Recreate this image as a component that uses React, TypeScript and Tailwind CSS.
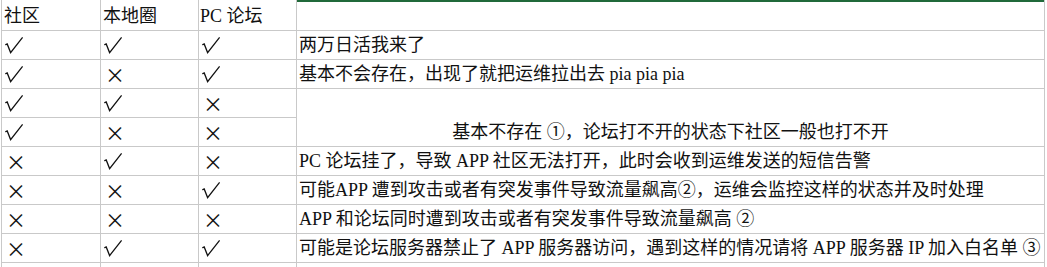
import React from "react";

const FONT = '"Liberation Serif", "Noto Sans CJK SC", serif';
const SYM = '"Noto Sans CJK SC", "Liberation Serif", serif';

type Row = [string, string, string, string | null];

const rows: Row[] = [
  ["√", "√", "√", "两万日活我来了"],
  ["√", "×", "√", "基本不会存在，出现了就把运维拉出去 pia pia pia"],
  ["√", "√", "×", "MERGED"],
  ["√", "×", "×", null],
  ["×", "√", "×", "PC 论坛挂了，导致 APP 社区无法打开，此时会收到运维发送的短信告警"],
  ["×", "×", "√", "可能APP 遭到攻击或者有突发事件导致流量飙高②，运维会监控这样的状态并及时处理"],
  ["×", "×", "×", "APP 和论坛同时遭到攻击或者有突发事件导致流量飙高 ②"],
  ["×", "√", "√", "可能是论坛服务器禁止了 APP 服务器访问，遇到这样的情况请将 APP 服务器 IP 加入白名单 ③"],
];

function Check() {
  return (
    <svg width="18" height="17" viewBox="0 0 18 17" fill="none" aria-label="√">
      <path d="M0.8 7.6 L2.2 6.9 L5.6 15.6 L17.2 0.8" stroke="#111" strokeWidth="1.3" strokeLinejoin="miter" strokeLinecap="round" />
    </svg>
  );
}

function Sym({ c }: { c: string }) {
  if (c === "√") {
    return (
      <div className="bg-white flex items-center pl-[3px] pt-px">
        <Check />
      </div>
    );
  }
  return (
    <div className="bg-white flex items-center pl-[4px] pt-[2px]" style={{ fontFamily: SYM }}>
      <span className="text-[20px] leading-none text-[#111]">{c}</span>
    </div>
  );
}

export default function App() {
  return (
    <div className="w-[1047px] h-[267px] bg-white overflow-hidden" style={{ fontFamily: FONT }}>
      <div className="ml-[1px] w-[1044px] grid grid-cols-[98px_97px_97px_747px] grid-rows-[30px_repeat(9,28px)] gap-px px-px bg-[#c9c9c9] text-[18px] text-[#111] leading-none">
        <div className="bg-white flex items-center pl-[2px] pt-[2px]">社区</div>
        <div className="bg-white flex items-center pl-[2px] pt-[2px]">本地圈</div>
        <div className="bg-white flex items-center pl-[1px] pt-[2px]">PC 论坛</div>
        <div className="bg-white border-t-2 border-[#20693a]"></div>
        {rows.map((r, i) => (
          <React.Fragment key={i}>
            <Sym c={r[0]} />
            <Sym c={r[1]} />
            <Sym c={r[2]} />
            {r[3] === "MERGED" ? (
              <div className="row-span-2 bg-white flex flex-col justify-end">
                <div className="h-[28px] flex items-center justify-center">
                  基本不存在 ①，论坛打不开的状态下社区一般也打不开
                </div>
              </div>
            ) : r[3] !== null ? (
              <div className="bg-white flex items-center pl-[2px] whitespace-nowrap">{r[3]}</div>
            ) : null}
          </React.Fragment>
        ))}
        <div className="bg-white"></div>
        <div className="bg-white"></div>
        <div className="bg-white"></div>
        <div className="bg-white"></div>
      </div>
    </div>
  );
}
